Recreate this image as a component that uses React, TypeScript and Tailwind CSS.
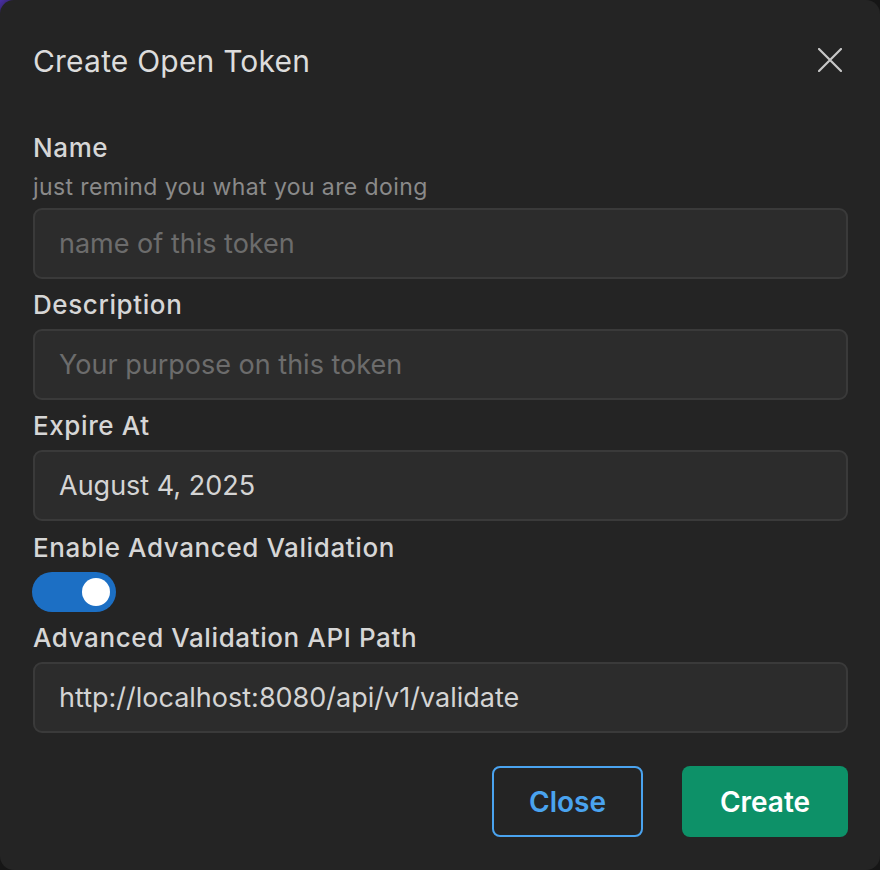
import { useState } from "react";

function Field({
  label,
  hint,
  placeholder,
  value,
}: {
  label: string;
  hint?: string;
  placeholder?: string;
  value?: string;
}) {
  return (
    <div className="flex flex-col">
      <label className="text-[26px] leading-[36px] font-medium tracking-[0.6px] text-[#d6d6d6] mt-[8px]">
        {label}
      </label>
      {hint && (
        <span className="text-[23px] leading-[30px] tracking-[0.4px] text-[#8a8a8a] mt-[6px]">
          {hint}
        </span>
      )}
      <input
        className="mt-[6px] h-[71px] w-full rounded-[9px] border-2 border-[#3a3a3a] bg-[#2c2c2c] px-[24px] text-[27px] text-[#d4d4d4] placeholder:text-[#6c6c6c] outline-none"
        placeholder={placeholder}
        defaultValue={value}
      />
    </div>
  );
}

export default function App() {
  const [enabled, setEnabled] = useState(true);

  return (
    <div className="w-[880px] h-[870px] bg-[linear-gradient(135deg,#4a2fa6_0%,#161616_2%)] font-['Inter','Noto_Sans',sans-serif]">
      <div className="h-full w-full rounded-[14px] bg-[#242424] pl-[33px] pr-[32px] pt-[43px]">
        {/* Header */}
        <div className="flex items-center justify-between">
          <h1 className="text-[30px] leading-[36px] font-normal tracking-[0.2px] text-[#dcdcdc]">
            Create Open Token
          </h1>
          <button className="mr-[6px] -mt-[2px] text-[#c8c8c8]">
            <svg width="24" height="24" viewBox="0 0 24 24" fill="none">
              <path d="M1 1L23 23M23 1L1 23" stroke="currentColor" strokeWidth="2.2" strokeLinecap="round" />
            </svg>
          </button>
        </div>

        <div className="mt-[51px] flex flex-col">
          <div className="-mt-[8px]">
            <Field label="Name" hint="just remind you what you are doing" placeholder="name of this token" />
          </div>
          <Field label="Description" placeholder="Your purpose on this token" />
          <Field label="Expire At" value="August 4, 2025" />

          <div className="flex flex-col">
            <label className="text-[26px] leading-[36px] font-medium tracking-[0.6px] text-[#d6d6d6] mt-[9px]">
              Enable Advanced Validation
            </label>
            <button
              onClick={() => setEnabled(!enabled)}
              className={`mt-[6px] -ml-[1px] flex h-[40px] w-[84px] items-center rounded-full px-[6px] ${
                enabled ? "justify-end bg-[#1c6fc4]" : "justify-start bg-[#444]"
              }`}
            >
              <span className="h-[28px] w-[28px] rounded-full bg-white" />
            </button>
          </div>

          <Field label="Advanced Validation API Path" value="http://localhost:8080/api/v1/validate" />
        </div>

        {/* Actions */}
        <div className="mt-[33px] flex justify-end gap-[39px]">
          <button className="h-[71px] w-[151px] rounded-[8px] border-2 border-[#4aa3ef] text-[28px] font-semibold text-[#4aa3ef]">
            Close
          </button>
          <button className="h-[71px] w-[166px] rounded-[8px] bg-[#0d9168] text-[28px] font-semibold text-white">
            Create
          </button>
        </div>
      </div>
    </div>
  );
}
